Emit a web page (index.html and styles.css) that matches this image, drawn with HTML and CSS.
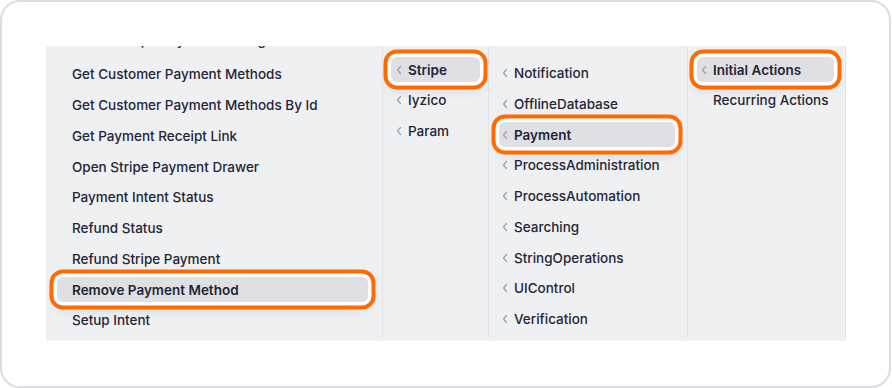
FILE: index.html
```html
<!DOCTYPE html>
<html>
<head>
<meta charset="utf-8">
<link rel="stylesheet" href="styles.css">
</head>
<body>
<div class="card">
  <div class="panel">
    <div class="col col1">
      <ul class="list">
        <li class="item partial">Create Stripe Payment Setting</li>
        <li class="item">Get Customer Payment Methods</li>
        <li class="item">Get Customer Payment Methods By Id</li>
        <li class="item">Get Payment Receipt Link</li>
        <li class="item">Open Stripe Payment Drawer</li>
        <li class="item">Payment Intent Status</li>
        <li class="item">Refund Status</li>
        <li class="item">Refund Stripe Payment</li>
        <li class="item active">Remove Payment Method</li>
        <li class="item">Setup Intent</li>
      </ul>
    </div>
    <div class="col col2">
      <ul class="list">
        <li class="item active"><svg class="chev" viewBox="0 0 6 10"><polyline points="4.5,1.5 1.5,5 4.5,8.5"/></svg>Stripe</li>
        <li class="item"><svg class="chev" viewBox="0 0 6 10"><polyline points="4.5,1.5 1.5,5 4.5,8.5"/></svg>Iyzico</li>
        <li class="item"><svg class="chev" viewBox="0 0 6 10"><polyline points="4.5,1.5 1.5,5 4.5,8.5"/></svg>Param</li>
      </ul>
    </div>
    <div class="col col3">
      <ul class="list">
        <li class="item"><svg class="chev" viewBox="0 0 6 10"><polyline points="4.5,1.5 1.5,5 4.5,8.5"/></svg>Notification</li>
        <li class="item"><svg class="chev" viewBox="0 0 6 10"><polyline points="4.5,1.5 1.5,5 4.5,8.5"/></svg>OfflineDatabase</li>
        <li class="item active"><svg class="chev" viewBox="0 0 6 10"><polyline points="4.5,1.5 1.5,5 4.5,8.5"/></svg>Payment</li>
        <li class="item"><svg class="chev" viewBox="0 0 6 10"><polyline points="4.5,1.5 1.5,5 4.5,8.5"/></svg>ProcessAdministration</li>
        <li class="item"><svg class="chev" viewBox="0 0 6 10"><polyline points="4.5,1.5 1.5,5 4.5,8.5"/></svg>ProcessAutomation</li>
        <li class="item"><svg class="chev" viewBox="0 0 6 10"><polyline points="4.5,1.5 1.5,5 4.5,8.5"/></svg>Searching</li>
        <li class="item"><svg class="chev" viewBox="0 0 6 10"><polyline points="4.5,1.5 1.5,5 4.5,8.5"/></svg>StringOperations</li>
        <li class="item"><svg class="chev" viewBox="0 0 6 10"><polyline points="4.5,1.5 1.5,5 4.5,8.5"/></svg>UIControl</li>
        <li class="item"><svg class="chev" viewBox="0 0 6 10"><polyline points="4.5,1.5 1.5,5 4.5,8.5"/></svg>Verification</li>
      </ul>
    </div>
    <div class="col col4">
      <ul class="list">
        <li class="item active"><svg class="chev" viewBox="0 0 6 10"><polyline points="4.5,1.5 1.5,5 4.5,8.5"/></svg>Initial Actions</li>
        <li class="item nochev">Recurring Actions</li>
      </ul>
    </div>
  </div>
</div>
</body>
</html>
```
FILE: styles.css
```css
* { box-sizing: border-box; }
html, body { margin: 0; padding: 0; background: #ffffff; }
body {
  font-family: Inter, "Noto Sans", sans-serif;
  font-size: 13.5px;
  color: #1f2637;
}
.card {
  width: 891px;
  height: 388px;
  border: 2px solid #dcdee2;
  border-radius: 20px;
  background: #ffffff;
  padding: 44px 0 0 44px;
}
.panel {
  width: 800px;
  height: 295px;
  background: #eff0f2;
  display: flex;
  padding-bottom: 3px;
}
.col {
  height: 100%;
  border-right: 1px solid #e1e3e7;
  overflow: hidden;
}
.col1 { width: 337px; padding: 0 14px 0 11px; }
.col2 { width: 106px; padding: 11px 8px 0 8px; }
.col3 { width: 199px; padding: 14.5px 12px 0 10px; }
.col4 { width: 158px; padding: 11px 11px 0 9px; }
.col1 .list { margin-top: -19px; }
.col1 .item.partial { margin-bottom: 4px; }
.list {
  list-style: none;
  margin: 0;
  padding: 0;
  display: flex;
  flex-direction: column;
  gap: 5.75px;
}
.item {
  height: 25px;
  display: flex;
  align-items: center;
  border-radius: 6px;
  white-space: nowrap;
  font-weight: 450;
}
.col1 .item { padding-left: 15px; }
.col2 .item { padding-left: 5px; }
.col3 .item { padding-left: 3px; }
.col4 .item { padding-left: 4px; }
.col4 .item.nochev { padding-left: 16px; }
.chev {
  width: 6px;
  height: 10px;
  margin-right: 6px;
  flex: none;
  fill: none;
  stroke: #9aa0aa;
  stroke-width: 1.2;
  stroke-linecap: round;
  stroke-linejoin: round;
}
.item.active {
  background: #dfe0e4;
  font-weight: 600;
  box-shadow: 0 0 0 3.5px #ffffff, 0 0 0 7.5px #ff6b00, 0 6px 14px rgba(20, 30, 50, 0.14);
}
```
